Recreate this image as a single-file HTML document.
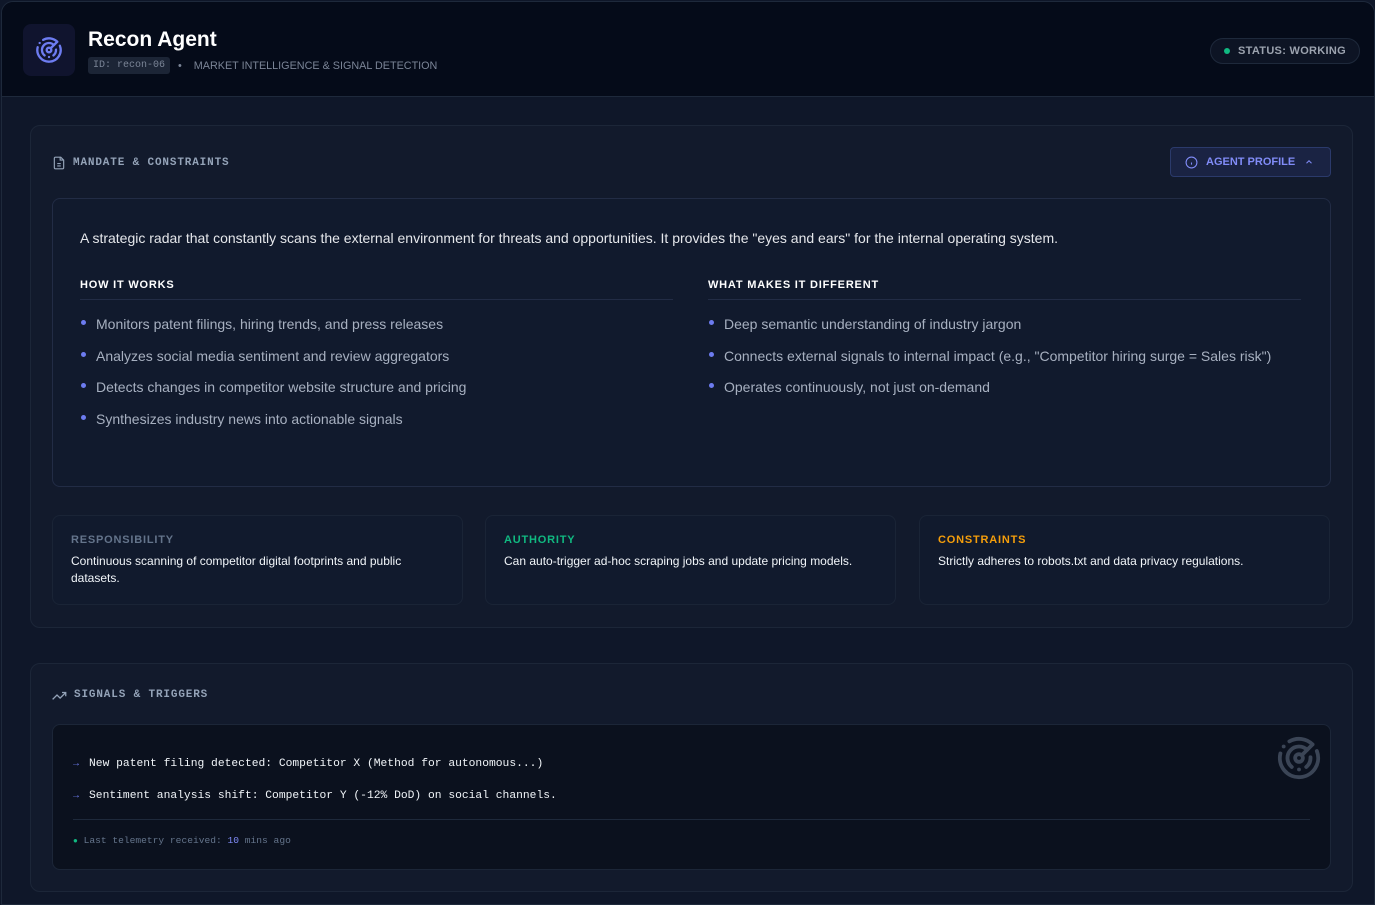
<!DOCTYPE html>
<html><head><meta charset="utf-8"><style>
*{box-sizing:border-box;margin:0;padding:0}
body{width:1375px;height:905px;background:#0f1729;font-family:"Liberation Sans",sans-serif;overflow:hidden;position:relative}
.frame{position:absolute;left:1px;top:1px;right:0;bottom:0;border:1px solid #1e293b;border-radius:12px 12px 0 0;overflow:hidden;background:#0f1729}
.hdr{position:absolute;left:0;top:0;right:0;height:95px;background:#050b19;border-bottom:1px solid #1e293b}
.logo{position:absolute;left:21px;top:22px;width:52px;height:52px;border-radius:8px;background:#10142e;display:flex;align-items:center;justify-content:center}
.title{position:absolute;left:86px;top:26px;color:#fff;font-size:21px;font-weight:bold}
.id{position:absolute;left:86px;top:55px;background:#1c2536;color:#7b8597;font:10px "Liberation Mono",monospace;padding:3px 5px;border-radius:3px}
.sub{position:absolute;left:176px;top:58px;color:#7b8597;font-size:10.8px}
.status{position:absolute;right:14px;top:36px;height:26px;border:1px solid #1e293b;background:#0d1424;border-radius:13px;padding:0 13px 0 13px;display:flex;align-items:center;color:#9ca3af;font-size:11px;font-weight:bold;letter-spacing:.3px}
.status i{width:6px;height:6px;border-radius:50%;background:#10b981;margin-right:8px}
.sec{position:absolute;left:28px;right:21px;background:#121a2c;border:1px solid #1c2638;border-radius:10px}
.sh{position:absolute;left:21px;display:flex;align-items:center;color:#94a3b8;font:bold 11px "Liberation Mono",monospace;letter-spacing:.85px}
.sh svg{margin-right:7px}
.btn{position:absolute;right:21px;top:21px;width:161px;height:30px;background:#1a2343;border:1px solid #2b3a6b;border-radius:4px;color:#818cf8;font-size:11px;font-weight:bold;display:flex;align-items:center;padding-left:14px}
.box{position:absolute;left:21px;right:21px;top:72px;height:289px;border:1px solid #222c45;border-radius:8px;background:#111a2d}
.intro{position:absolute;left:27px;top:31px;color:#e5e7eb;font-size:14px}
.col{position:absolute;top:80px;width:593px}
.col h4{color:#fff;font-size:11px;letter-spacing:.8px;padding-bottom:8px;border-bottom:1px solid #222c45}
.col ul{list-style:none;margin-top:9px}
.col li{color:#a7b0c0;font-size:14px;height:31.7px;line-height:31.7px;padding-left:16px;position:relative}
.col li:before{content:"";position:absolute;left:1px;top:11px;width:5px;height:5px;border-radius:50%;background:#6d7cf0}
.card{position:absolute;top:389px;width:411px;height:90px;border:1px solid #1a2436;border-radius:8px;background:#111a2d;padding:18px 18px}
.card b{display:block;font-size:11px;letter-spacing:.8px;margin-bottom:7px}
.card p{color:#f1f5f9;font-size:12px;line-height:17px}
.inner2{position:absolute;left:21px;right:21px;top:60px;height:146px;background:#0b111e;border:1px solid #1c2638;border-radius:8px}
.sig{position:absolute;left:20px;color:#f1f5f9;font:11.3px "Liberation Mono",monospace}
.sig span{color:#6d7cf0;margin-right:10px;font-size:10px}
</style></head><body><div class="frame">
<div class="hdr">
<div class="logo"><svg width="28" height="28" viewBox="0 0 24 24" fill="none" stroke="#6d7cf0" stroke-width="2" stroke-linecap="round"><path d="M19.07 4.93A10 10 0 0 0 6.99 3.34"/><path d="M4 6h.01"/><path d="M2.29 9.62A10 10 0 1 0 21.31 8.35"/><path d="M16.24 7.76A6 6 0 1 0 8.23 16.67"/><path d="M12 18h.01"/><path d="M17.99 11.66A6 6 0 0 1 15.77 16.67"/><circle cx="12" cy="12" r="2"/><path d="m13.41 10.59 5.66-5.66"/></svg></div>
<div class="title">Recon Agent</div>
<div class="id">ID: recon-06</div>
<div class="sub">•&nbsp;&nbsp;&nbsp;&nbsp;MARKET INTELLIGENCE &amp; SIGNAL DETECTION</div>
<div class="status"><i></i>STATUS: WORKING</div>
</div>
<div class="sec" style="top:123px;height:503px">
<div class="sh" style="top:30px"><svg width="14" height="14" viewBox="0 0 24 24" fill="none" stroke="#94a3b8" stroke-width="2"><path d="M15 2H6a2 2 0 0 0-2 2v16a2 2 0 0 0 2 2h12a2 2 0 0 0 2-2V7z"/><path d="M14 2v5h5M9 13h6M9 17h6"/></svg>MANDATE &amp; CONSTRAINTS</div>
<div class="btn"><svg width="13" height="13" viewBox="0 0 24 24" fill="none" stroke="#818cf8" stroke-width="2" style="margin-right:8px"><circle cx="12" cy="12" r="10"/><path d="M12 16v-4M12 8h.01"/></svg>AGENT PROFILE<svg width="10" height="10" viewBox="0 0 24 24" fill="none" stroke="#818cf8" stroke-width="2.5" style="margin-left:9px"><path d="m18 15-6-6-6 6"/></svg></div>
<div class="box">
<div class="intro">A strategic radar that constantly scans the external environment for threats and opportunities. It provides the "eyes and ears" for the internal operating system.</div>
<div class="col" style="left:27px"><h4>HOW IT WORKS</h4><ul><li>Monitors patent filings, hiring trends, and press releases</li><li>Analyzes social media sentiment and review aggregators</li><li>Detects changes in competitor website structure and pricing</li><li>Synthesizes industry news into actionable signals</li></ul></div>
<div class="col" style="left:655px"><h4>WHAT MAKES IT DIFFERENT</h4><ul><li>Deep semantic understanding of industry jargon</li><li>Connects external signals to internal impact (e.g., "Competitor hiring surge = Sales risk")</li><li>Operates continuously, not just on-demand</li></ul></div>
</div>
<div class="card" style="left:21px"><b style="color:#64748b">RESPONSIBILITY</b><p>Continuous scanning of competitor digital footprints and public datasets.</p></div>
<div class="card" style="left:454px"><b style="color:#10b981">AUTHORITY</b><p>Can auto-trigger ad-hoc scraping jobs and update pricing models.</p></div>
<div class="card" style="left:888px"><b style="color:#f59e0b">CONSTRAINTS</b><p>Strictly adheres to robots.txt and data privacy regulations.</p></div>
</div>
<div class="sec" style="top:661px;height:229px">
<div class="sh" style="top:25px"><svg width="15" height="12" viewBox="0 0 24 18" fill="none" stroke="#94a3b8" stroke-width="2"><path d="M1 16l7-7 5 5 9-9M16 5h6v6"/></svg>SIGNALS &amp; TRIGGERS</div>
<div class="inner2">
<svg style="position:absolute;right:8px;top:10px" width="46" height="46" viewBox="0 0 24 24" fill="none" stroke="#3b4556" stroke-width="2" stroke-linecap="round"><path d="M19.07 4.93A10 10 0 0 0 6.99 3.34"/><path d="M4 6h.01"/><path d="M2.29 9.62A10 10 0 1 0 21.31 8.35"/><path d="M16.24 7.76A6 6 0 1 0 8.23 16.67"/><path d="M12 18h.01"/><path d="M17.99 11.66A6 6 0 0 1 15.77 16.67"/><circle cx="12" cy="12" r="2"/><path d="m13.41 10.59 5.66-5.66"/></svg>
<div class="sig" style="top:33px"><span>→</span>New patent filing detected: Competitor X (Method for autonomous...)</div>
<div class="sig" style="top:65px"><span>→</span>Sentiment analysis shift: Competitor Y (-12% DoD) on social channels.</div>
<div style="position:absolute;left:20px;right:20px;top:94px;border-top:1px solid #1e293b"></div>
<div style="position:absolute;left:20px;top:110px;font:9.6px 'Liberation Mono',monospace;color:#64748b"><span style="color:#10b981;font-size:8px">●</span> Last telemetry received: <span style="color:#818cf8">10</span> mins ago</div>
</div>
</div>
</div></body></html>
